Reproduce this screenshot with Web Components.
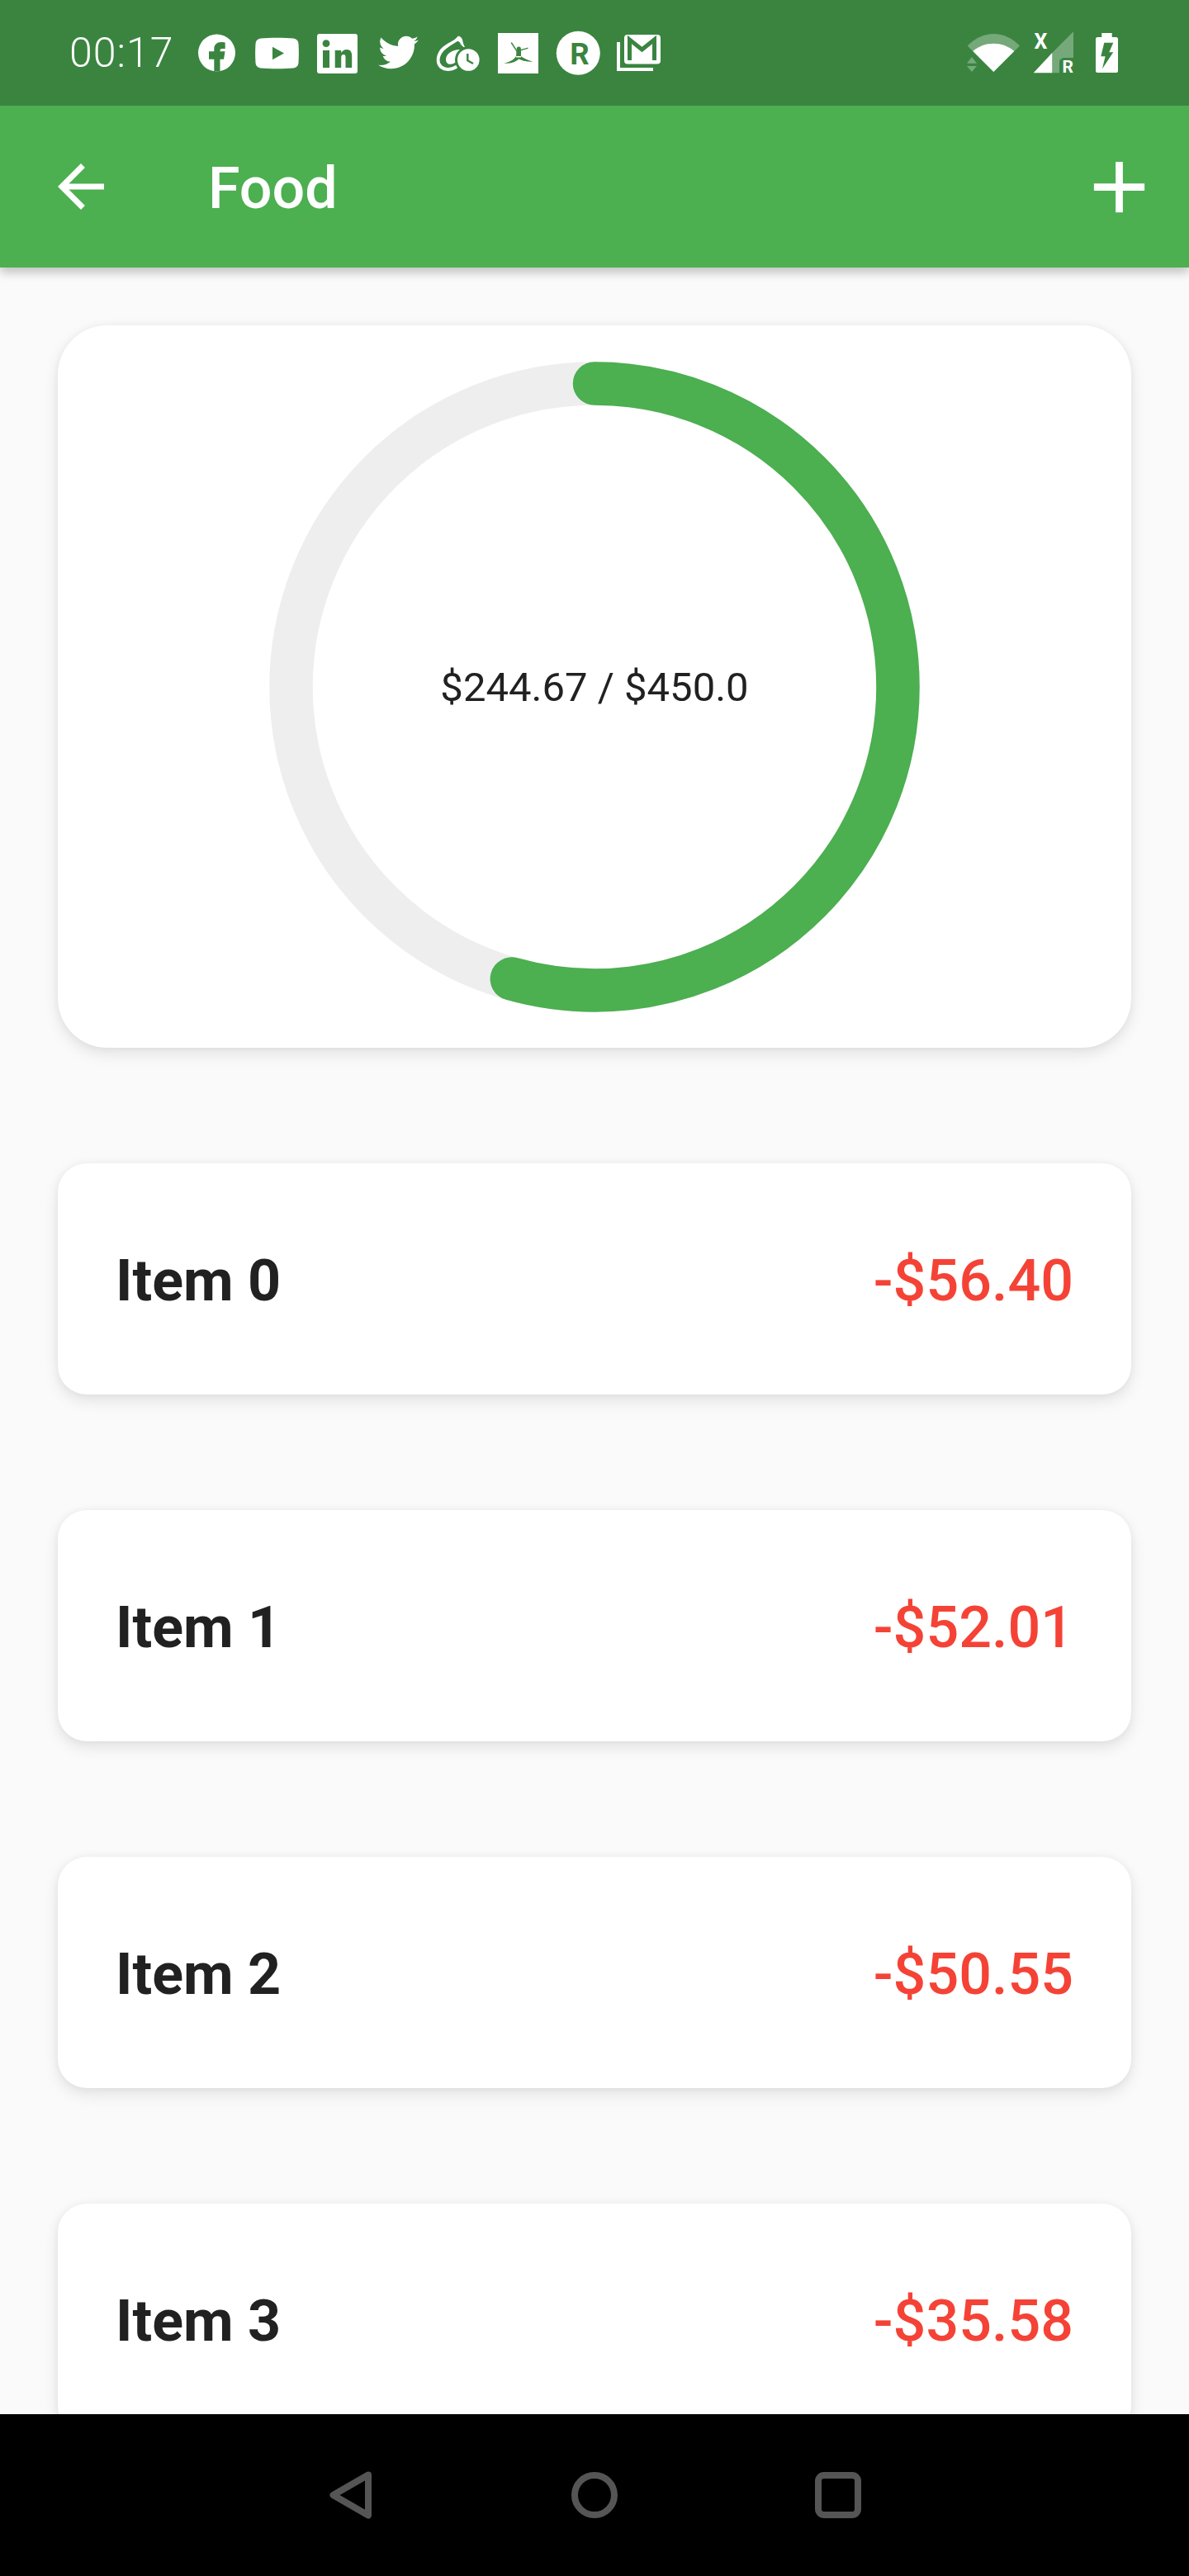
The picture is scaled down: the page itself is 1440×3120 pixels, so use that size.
<!DOCTYPE html>
<html lang="en">
<head>
<meta charset="utf-8">
<title>Food</title>
<style>
    html, body { margin: 0; padding: 0; background: #fafafa; }
</style>
</head>
<body>
<phone-screen>
    <status-bar slot="header"></status-bar>
    <app-bar slot="header" title="Food"></app-bar>
    <budget-ring spent="244.67" total="450.0"></budget-ring>
    <expense-item amount="-$56.40">Item 0</expense-item>
    <expense-item amount="-$52.01">Item 1</expense-item>
    <expense-item amount="-$50.55">Item 2</expense-item>
    <expense-item amount="-$35.58">Item 3</expense-item>
    <nav-bar slot="nav"></nav-bar>
</phone-screen>

<script>
const BAR = "#3a8440";

class PhoneScreen extends HTMLElement {
    constructor() {
        super();
        this.attachShadow({ mode: "open" });
        this.shadowRoot.innerHTML = `
            <style>
                :host {
                    display: flex;
                    flex-direction: column;
                    width: 1440px;
                    height: 3120px;
                    overflow: hidden;
                    background: #fafafa;
                    font-family: Roboto, "Liberation Sans", sans-serif;
                }
                header {
                    flex: none;
                    position: relative;
                    z-index: 1;
                    box-shadow: 0 7px 10px rgba(0, 0, 0, 0.14), 0 4px 14px rgba(0, 0, 0, 0.1);
                }
                main {
                    flex: 1;
                    min-height: 0;
                    overflow: hidden;
                    display: flex;
                    flex-direction: column;
                    gap: 140px;
                    padding: 70px 70px 0;
                }
                footer { flex: none; position: relative; z-index: 1; }
            </style>
            <header><slot name="header"></slot></header>
            <main><slot></slot></main>
            <footer><slot name="nav"></slot></footer>
        `;
    }
}

class StatusBar extends HTMLElement {
    constructor() {
        super();
        this.attachShadow({ mode: "open" });
        this.shadowRoot.innerHTML = `
            <style>
                :host {
                    display: flex;
                    align-items: center;
                    height: 128px;
                    padding: 0 86px 0 84px;
                    box-sizing: border-box;
                    background: ${BAR};
                    color: #fff;
                }
                .time { font-size: 50px; font-weight: 350; letter-spacing: 1px; width: 156px; flex: none; line-height: 1; }
                .group { display: flex; align-items: center; gap: 22px; }
                .system { margin-left: auto; gap: 16px; }
                svg { display: block; height: 56px; overflow: visible; flex: none; }
                text { font-family: Roboto, "Liberation Sans", sans-serif; }
            </style>
            <span class="time">00:17</span>
            <div class="group">
                <svg width="47" viewBox="240 36 47 56">
                    <circle cx="262.5" cy="64" r="22.5" fill="#fff"/>
                    <path fill="${BAR}" d="M259.3 86.6V71.7H253V62.3H259.3V59C259.3 54 263 51 267.5 51 270 51 272.7 51.5 272.7 51.5V59H269C267 59 266.5 60.2 266.5 61V62.3H272.5L271 71.7H266.5V86.6z"/>
                </svg>
                <svg width="53" viewBox="309 36 53 56">
                    <path fill="#fff" d="M316 46.5C326 45.5 345 45.5 355 46.5 359 47 361 49 361.5 53 362 60 362 69 361.5 76 361 80 359 82 355 82.5 345 83.5 326 83.5 316 82.5 312 82 310 80 309.5 76 309 69 309 60 309.5 53 310 49 312 47 316 46.5z"/>
                    <path fill="${BAR}" d="M330 56.7l14 7.8-14 7.8z"/>
                </svg>
                <svg width="49" viewBox="384 36 49 56">
                    <rect x="384" y="41" width="49" height="48" rx="3" fill="#fff"/>
                    <circle cx="395" cy="52.7" r="4.4" fill="${BAR}"/>
                    <rect x="391" y="61" width="8" height="21" fill="${BAR}"/>
                    <path fill="${BAR}" d="M405.7 61h7.5v3c1.2-2 3.6-4 6.5-4 5 0 6.5 3.5 6.5 8v14h-7.7V70c0-2.5-.5-4-2.5-4-2.2 0-2.8 1.7-2.8 4v12h-7.5z"/>
                </svg>
                <svg width="51" viewBox="455 36 51 56">
                    <path transform="translate(456.2 37.8) scale(2.145)" fill="#fff" d="M23.643 4.937c-.835.37-1.732.62-2.675.733.962-.576 1.7-1.49 2.048-2.578-.9.534-1.897.922-2.958 1.13-.85-.904-2.06-1.47-3.4-1.47-2.572 0-4.658 2.086-4.658 4.66 0 .364.042.718.12 1.06-3.873-.195-7.304-2.05-9.602-4.868-.4.69-.63 1.49-.63 2.342 0 1.616.823 3.043 2.072 3.878-.764-.025-1.482-.234-2.11-.583v.06c0 2.257 1.605 4.14 3.737 4.568-.392.106-.803.162-1.227.162-.3 0-.593-.028-.877-.082.593 1.85 2.313 3.198 4.352 3.234-1.595 1.25-3.604 1.995-5.786 1.995-.376 0-.747-.022-1.112-.065 2.062 1.323 4.51 2.093 7.14 2.093 8.57 0 13.255-7.098 13.255-13.254 0-.2-.005-.402-.014-.602.91-.658 1.7-1.477 2.323-2.41z"/>
                </svg>
                <svg width="53" viewBox="528 36 53 56">
                    <path fill="#fff" d="M554.5 44C550 50 541 52 535 58 527 66 526 80 536 84.5 541 87 548 86 553 83L575 65C562 62 561 52 560 48 559 45 556 43 554.5 44z"/>
                    <path fill="${BAR}" d="M553 50.5C548 54 542 57 538 61 531 68 530.5 78 538 81 542 83 547 82 552 79L570 62C562 58 558 55 557 51.5 556 50 554 49.5 553 50.5z"/>
                    <path fill="#fff" d="M556.7 60C548 60 540 65 540 72 540 77 544 79 549 77 554 75 560 70 563 65z"/>
                    <circle cx="567.3" cy="72.5" r="14.8" fill="#fff" stroke="${BAR}" stroke-width="3"/>
                    <path d="M566.3 65v8.3l6.7 3.7" fill="none" stroke="${BAR}" stroke-width="2.4"/>
                </svg>
                <svg width="49" viewBox="603 36 49 56">
                    <rect x="603" y="40" width="49" height="49" fill="#fff"/>
                    <circle cx="628.3" cy="59" r="2.6" fill="${BAR}"/>
                    <path fill="none" stroke="${BAR}" stroke-width="1.4" stroke-linecap="round" d="M619.5 52l6.5 10 13-3.7"/>
                    <path fill="${BAR}" d="M625.5 61.5L631 60.5V69.5L625 69.5zM625 68C622 73 616 75.5 610 76.7 617 77.5 624 75.5 628.5 71.5 633 74 640 74.7 645 75 640 72.5 634 71 631 68z"/>
                </svg>
                <svg width="51" viewBox="674 36 51 56">
                    <circle cx="700.3" cy="64.3" r="26.5" fill="#fff"/>
                    <text x="702" y="78.3" text-anchor="middle" font-size="36.6" font-weight="700" fill="${BAR}">R</text>
                </svg>
                <svg width="53" viewBox="747 36 53 56">
                    <rect x="756" y="42" width="44" height="35.5" rx="4" fill="#fff"/>
                    <path d="M749 51v33h42" fill="none" stroke="#fff" stroke-width="4"/>
                    <path d="M762.5 73V48l15 12 15-12v25" fill="none" stroke="${BAR}" stroke-width="5"/>
                </svg>
            </div>
            <div class="group system">
                <svg width="64" viewBox="1171 36 64 56">
                    <path fill="#fff" fill-opacity="0.3" d="M1171.7 55.5C1190 36 1217 36 1235 55.5L1203.3 87z"/>
                    <path fill="#fff" d="M1178.3 62C1192 49.6 1214.6 49.6 1228.3 62L1203.3 87z"/>
                    <path fill="#fff" fill-opacity="0.3" d="M1177 69l6 7.7h-12zM1177 87l6-7h-12z"/>
                </svg>
                <svg width="60" viewBox="1251 36 60 56">
                    <path fill="#fff" fill-opacity="0.3" d="M1274.3 64l25.7-25.7V70h-11c-3.5 0-6 2.5-6 6v12.3h-8.7z"/>
                    <path fill="#fff" d="M1251.7 88.3l22.6-24.3v24.3z"/>
                    <text x="1252.5" y="59.3" font-size="25" font-weight="700" fill="#fff">X</text>
                    <text x="1286.5" y="88.3" font-size="21" font-weight="700" fill="#fff">R</text>
                </svg>
                <svg width="27" viewBox="1327 36 27 56">
                    <path fill="#fff" d="M1334.3 40h12.4v5h5.3c1 0 2 1 2 2v39c0 1-1 2-2 2h-23c-1 0-2-1-2-2V47c0-1 1-2 2-2h5.3z"/>
                    <path fill="${BAR}" d="M1337.3 51.7h11l-5 11.6h5l-13.3 20 3.6-15h-5.3z"/>
                </svg>
            </div>
        `;
    }
}

class AppBar extends HTMLElement {
    constructor() {
        super();
        this.attachShadow({ mode: "open" });
    }

    connectedCallback() {
        const title = this.getAttribute("title") || "";
        this.shadowRoot.innerHTML = `
            <style>
                :host {
                    display: flex;
                    align-items: center;
                    height: 196px;
                    padding: 0 32px 0 56px;
                    background: #4caf50;
                    color: #fff;
                }
                svg { display: block; flex: none; fill: #fff; }
                h1 { margin: 0 0 0 112px; padding-top: 4px; flex: 1; font-size: 70px; font-weight: 500; line-height: 1; }
            </style>
            <svg width="84" height="84" viewBox="0 0 24 24"><path d="M20 11H7.83l5.59-5.59L12 4l-8 8 8 8 1.41-1.41L7.83 13H20v-2z"/></svg>
            <h1>${title}</h1>
            <svg width="105" height="105" viewBox="0 0 24 24"><path d="M19 13h-6v6h-2v-6H5v-2h6V5h2v6h6v2z"/></svg>
        `;
    }
}

class BudgetRing extends HTMLElement {
    constructor() {
        super();
        this.attachShadow({ mode: "open" });
    }

    connectedCallback() {
        const spent = this.getAttribute("spent");
        const total = this.getAttribute("total");
        const r = 367.5;
        const full = 2 * Math.PI * r;
        const done = (parseFloat(spent) / parseFloat(total)) * full;
        this.shadowRoot.innerHTML = `
            <style>
                :host {
                    display: block;
                    flex: none;
                    height: 875px;
                    background: #fff;
                    border-radius: 60px;
                    box-shadow: 0 7px 18px rgba(0, 0, 0, 0.1), 0 0 10px rgba(0, 0, 0, 0.04);
                }
                .wrap {
                    height: 100%;
                    display: grid;
                    place-items: center;
                }
                .wrap > * { grid-area: 1 / 1; }
                svg { display: block; }
                span { font-size: 49px; color: #212121; padding-top: 2px; }
            </style>
            <div class="wrap">
                <svg width="788" height="788" viewBox="0 0 788 788" fill="none" stroke-width="52.5">
                    <circle cx="394" cy="394" r="${r}" stroke="#eeeeee"/>
                    <circle cx="394" cy="394" r="${r}" stroke="#4caf50" stroke-linecap="round"
                        stroke-dasharray="${done} ${full}" transform="rotate(-90 394 394)"/>
                </svg>
                <span>$${spent} / $${total}</span>
            </div>
        `;
    }
}

class ExpenseItem extends HTMLElement {
    constructor() {
        super();
        this.attachShadow({ mode: "open" });
    }

    connectedCallback() {
        this.shadowRoot.innerHTML = `
            <style>
                :host {
                    display: flex;
                    flex: none;
                    align-items: center;
                    justify-content: space-between;
                    box-sizing: border-box;
                    height: 280px;
                    padding: 4px 70px 0;
                    background: #fff;
                    border-radius: 35px;
                    box-shadow: 0 7px 18px rgba(0, 0, 0, 0.1), 0 0 10px rgba(0, 0, 0, 0.04);
                    font-size: 70px;
                }
                .name { font-weight: 700; color: #212121; }
                .amount { font-weight: 500; color: #f44336; }
            </style>
            <span class="name"><slot></slot></span>
            <span class="amount">${this.getAttribute("amount")}</span>
        `;
    }
}

class NavBar extends HTMLElement {
    constructor() {
        super();
        this.attachShadow({ mode: "open" });
        this.shadowRoot.innerHTML = `
            <style>
                :host {
                    display: flex;
                    justify-content: center;
                    align-items: center;
                    height: 196px;
                    background: #000;
                }
                div { width: 295px; display: flex; justify-content: center; }
                svg { display: block; fill: none; stroke: #555; stroke-width: 8; stroke-linejoin: round; }
            </style>
            <div><svg width="56" height="60" viewBox="0 0 56 60"><path d="M49 5.5L6.5 30 49 54.5z"/></svg></div>
            <div><svg width="56" height="56" viewBox="0 0 56 56"><circle cx="28" cy="28" r="24"/></svg></div>
            <div><svg width="56" height="56" viewBox="0 0 56 56"><rect x="4" y="4" width="48" height="48" rx="7"/></svg></div>
        `;
    }
}

customElements.define("phone-screen", PhoneScreen);
customElements.define("status-bar", StatusBar);
customElements.define("app-bar", AppBar);
customElements.define("budget-ring", BudgetRing);
customElements.define("expense-item", ExpenseItem);
customElements.define("nav-bar", NavBar);
</script>
</body>
</html>
